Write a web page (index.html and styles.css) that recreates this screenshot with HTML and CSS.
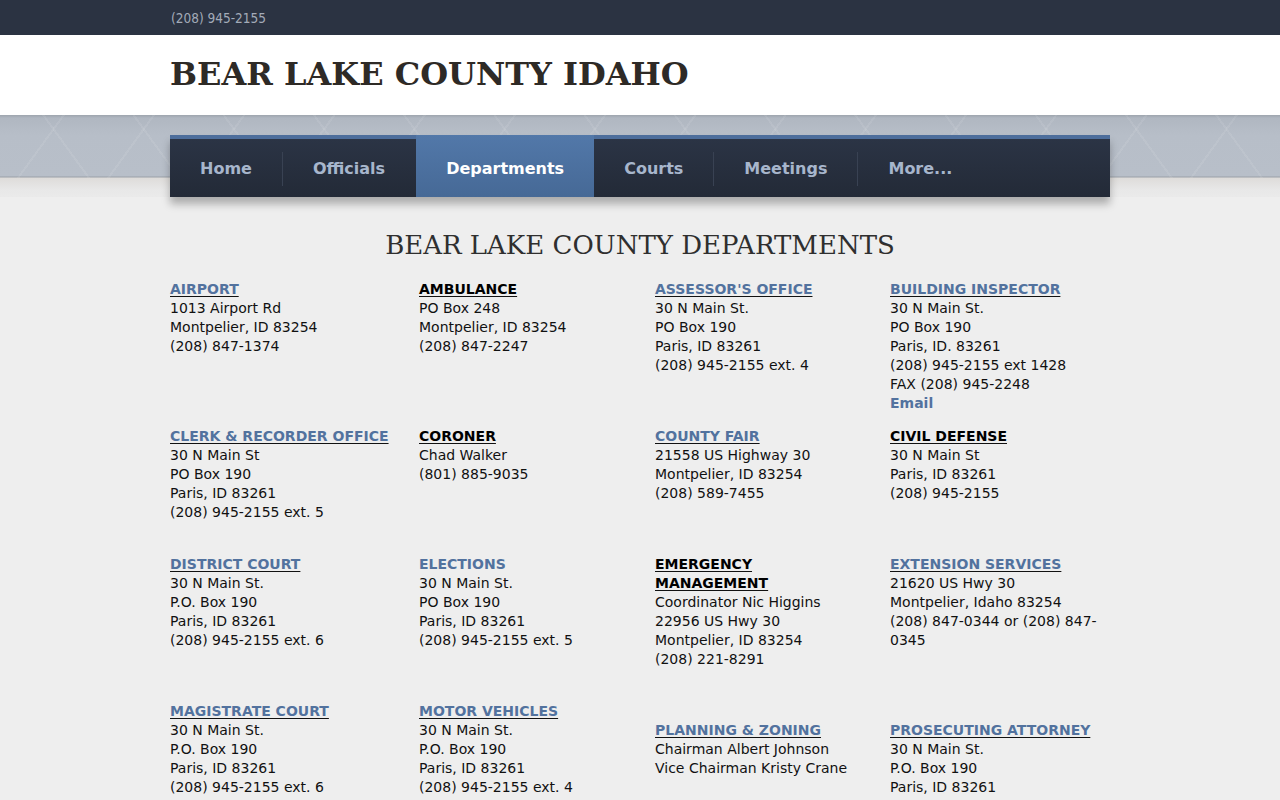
FILE: index.html
```html
<!DOCTYPE html>
<html lang="en">
<head>
<meta charset="utf-8">
<title>Bear Lake County Idaho - Departments</title>
<link rel="stylesheet" href="styles.css">
</head>
<body>
<div class="topbar"><div class="wrap"><span class="phone">(208) 945-2155</span></div></div>
<header class="header"><div class="wrap"><h1 class="site-title">BEAR LAKE COUNTY IDAHO</h1></div></header>
<div class="band">
  <nav class="nav">
    <a class="nav-item" href="#">Home</a>
    <a class="nav-item sep" href="#">Officials</a>
    <a class="nav-item active" href="#">Departments</a>
    <a class="nav-item" href="#">Courts</a>
    <a class="nav-item sep" href="#">Meetings</a>
    <a class="nav-item sep" href="#">More...</a>
  </nav>
</div>
<main class="wrap main">
  <h2 class="page-title">BEAR LAKE COUNTY DEPARTMENTS</h2>

  <div class="row first">
    <div class="cell"><a class="dept link u" href="#">AIRPORT</a><br>1013 Airport Rd<br>Montpelier, ID 83254<br>(208) 847-1374</div>
    <div class="cell"><span class="dept plain u">AMBULANCE</span><br>PO Box 248<br>Montpelier, ID 83254<br>(208) 847-2247</div>
    <div class="cell"><a class="dept link u" href="#">ASSESSOR'S OFFICE</a><br>30 N Main St.<br>PO Box 190<br>Paris, ID 83261<br>(208) 945-2155 ext. 4</div>
    <div class="cell"><a class="dept link u" href="#">BUILDING INSPECTOR</a><br>30 N Main St.<br>PO Box 190<br>Paris, ID. 83261<br>(208) 945-2155 ext 1428<br>FAX (208) 945-2248<br><a class="dept link" href="#">Email</a></div>
  </div>

  <div class="row">
    <div class="cell"><a class="dept link u" href="#">CLERK &amp; RECORDER OFFICE</a><br>30 N Main St<br>PO Box 190<br>Paris, ID 83261<br>(208) 945-2155 ext. 5</div>
    <div class="cell"><span class="dept plain u">CORONER</span><br>Chad Walker<br>(801) 885-9035</div>
    <div class="cell"><a class="dept link u" href="#">COUNTY FAIR</a><br>21558 US Highway 30<br>Montpelier, ID 83254<br>(208) 589-7455</div>
    <div class="cell"><span class="dept plain u">CIVIL DEFENSE</span><br>30 N Main St<br>Paris, ID 83261<br>(208) 945-2155</div>
  </div>

  <div class="row">
    <div class="cell"><a class="dept link u" href="#">DISTRICT COURT</a><br>30 N Main St.<br>P.O. Box 190<br>Paris, ID 83261<br>(208) 945-2155 ext. 6</div>
    <div class="cell"><a class="dept link" href="#">ELECTIONS</a><br>30 N Main St.<br>PO Box 190<br>Paris, ID 83261<br>(208) 945-2155 ext. 5</div>
    <div class="cell"><span class="dept plain u">EMERGENCY MANAGEMENT</span><br>Coordinator Nic Higgins<br>22956 US Hwy 30<br>Montpelier, ID 83254<br>(208) 221-8291</div>
    <div class="cell"><a class="dept link u" href="#">EXTENSION SERVICES</a><br>21620 US Hwy 30<br>Montpelier, Idaho 83254<br>(208) 847-0344 or (208) 847-0345</div>
  </div>

  <div class="row">
    <div class="cell"><a class="dept link u" href="#">MAGISTRATE COURT</a><br>30 N Main St.<br>P.O. Box 190<br>Paris, ID 83261<br>(208) 945-2155 ext. 6</div>
    <div class="cell"><a class="dept link u" href="#">MOTOR VEHICLES</a><br>30 N Main St.<br>P.O. Box 190<br>Paris, ID 83261<br>(208) 945-2155 ext. 4</div>
    <div class="cell lower"><a class="dept link u" href="#">PLANNING &amp; ZONING</a><br>Chairman Albert Johnson<br>Vice Chairman Kristy Crane</div>
    <div class="cell lower"><a class="dept link u" href="#">PROSECUTING ATTORNEY</a><br>30 N Main St.<br>P.O. Box 190<br>Paris, ID 83261</div>
  </div>
</main>
</body>
</html>
```

FILE: styles.css
```css
* { box-sizing: border-box; }

html, body {
  margin: 0;
  padding: 0;
}

body {
  background: #eeeeee;
  font-family: "DejaVu Sans", "Liberation Sans", sans-serif;
  font-size: 14px;
  line-height: 19px;
  color: #111;
}

.wrap {
  width: 940px;
  margin: 0 auto;
}

.topbar {
  background: #2b3342;
  height: 35px;
}

.topbar .phone {
  display: block;
  padding-left: 1px;
  font-family: "DejaVu Sans Condensed", "DejaVu Sans", sans-serif;
  font-stretch: condensed;
  font-size: 13.5px;
  line-height: 36px;
  color: #a3abb8;
}

.header {
  background: #ffffff;
  height: 80px;
}

.site-title {
  margin: 0;
  padding-top: 20px;
  font-family: "DejaVu Serif", "Liberation Serif", serif;
  font-weight: bold;
  font-size: 32px;
  line-height: 38px;
  color: #2e2a26;
  letter-spacing: 0;
}

.band {
  padding-top: 20px;
  background:
    repeating-linear-gradient(54deg, rgba(255,255,255,0) 0, rgba(255,255,255,0) 71px, rgba(255,255,255,0.08) 71px, rgba(255,255,255,0.08) 73px) 0 0 / 100% 63px no-repeat,
    repeating-linear-gradient(-54deg, rgba(255,255,255,0) 0, rgba(255,255,255,0) 71px, rgba(255,255,255,0.08) 71px, rgba(255,255,255,0.08) 73px) 0 0 / 100% 63px no-repeat,
    linear-gradient(to bottom, #9ea5ae 0, #b0b7c1 3px, #b7bec8 20px, #b8bfc9 61px, #9aa0a8 62px, #dedcda 63px, #e8e8e8 75px, #eeeeee 95px);
}

.nav {
  width: 940px;
  margin: 0 auto;
  display: flex;
  height: 62px;
  border-top: 4px solid #4d6e9c;
  background: linear-gradient(to bottom, #2b3445, #232a37);
  box-shadow: 0 7px 8px rgba(0, 0, 0, 0.28);
}

.nav-item {
  position: relative;
  display: block;
  padding: 1px 30px 0 30px;
  font-weight: bold;
  font-size: 16px;
  line-height: 57px;
  color: #a7b6cc;
  text-decoration: none;
}

.nav-item.sep {
  margin-left: 1px;
}

.nav-item.sep::before {
  content: "";
  position: absolute;
  left: -1px;
  top: 13px;
  bottom: 11px;
  width: 1px;
  background: #394253;
}

.nav-item.active {
  margin-left: 1px;
  margin-top: -4px;
  padding-top: 5px;
  height: 62px;
  color: #ffffff;
  background: linear-gradient(to bottom, #5278a9, #466996);
}

.main {
  padding-bottom: 40px;
}

.page-title {
  margin: 33px 0 20px;
  text-align: center;
  font-family: "DejaVu Serif", "Liberation Serif", serif;
  font-weight: normal;
  font-size: 26px;
  line-height: 30px;
  color: #2f2f2f;
}

.row {
  display: grid;
  grid-template-columns: 249px 236px 235px 220px;
  padding-bottom: 33px;
}

.row.first {
  padding-bottom: 14px;
}

.cell:nth-child(3) {
  padding-right: 25px;
}

.cell.lower {
  padding-top: 19px;
}

.dept {
  font-weight: bold;
  text-decoration: none;
}

.dept.link {
  color: #52729e;
}

.dept.plain {
  color: #000;
}

.dept.u {
  text-decoration: underline;
  text-decoration-color: #111;
  text-decoration-thickness: 1px;
  text-underline-offset: 2px;
}
```
